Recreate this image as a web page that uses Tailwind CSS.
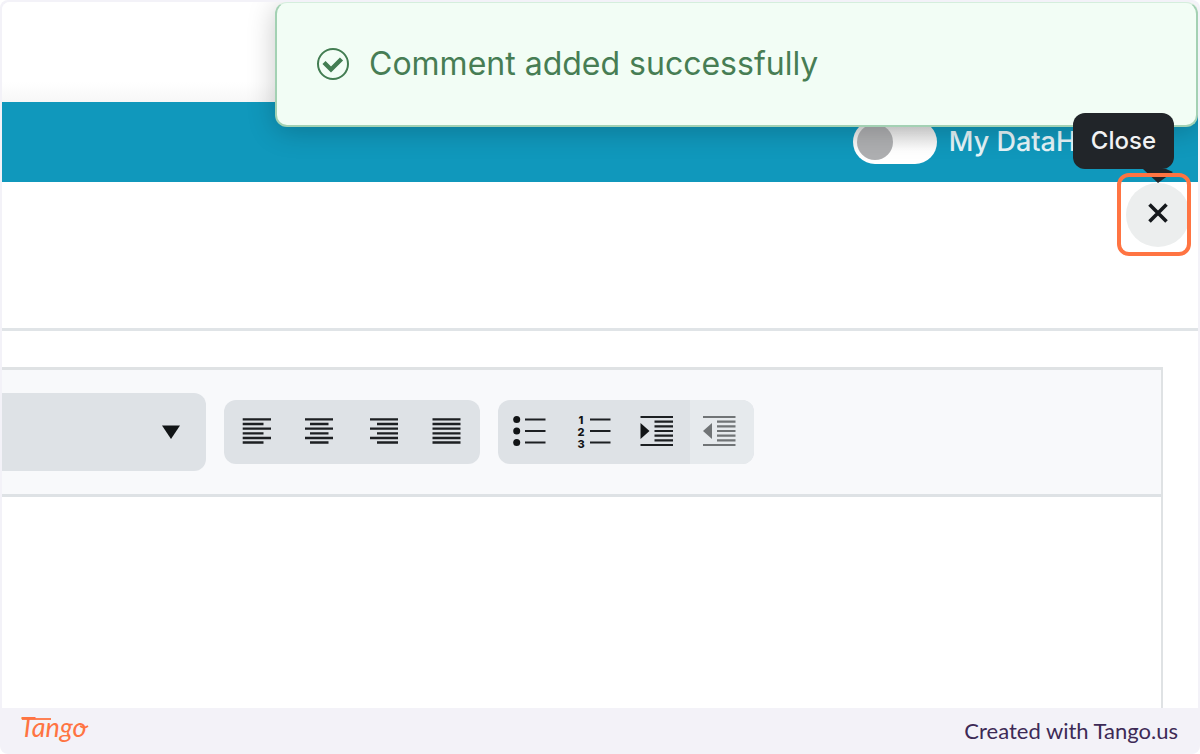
<!DOCTYPE html>
<html lang="en">
<head>
    <meta charset="UTF-8">
    <meta name="viewport" content="width=device-width, initial-scale=1.0">
    <title>Comment added successfully</title>
    <script src="https://cdn.jsdelivr.net/npm/@tailwindcss/browser@4"></script>
</head>
<body class="bg-white font-['Inter',sans-serif]">
    <div class="min-h-screen flex flex-col bg-[#f3f2f8] rounded-lg px-0.5 pt-0.5">
        <main class="relative flex-grow flex flex-col bg-white rounded-t-lg overflow-hidden">
            <div class="h-[100px] bg-gradient-to-b from-white from-80% to-[#f7f7f7]"></div>
            <header class="h-20 flex justify-end items-center gap-3 pr-[122px] bg-[#1098bc]">
                <span class="relative flex">
                    <input id="datahub" type="checkbox" class="peer appearance-none w-[84px] h-11 rounded-full bg-gradient-to-b from-[#dcdcdc] to-white to-70%">
                    <span class="pointer-events-none absolute left-1 top-1 size-9 rounded-full bg-[#aeafb1] peer-checked:left-11"></span>
                </span>
                <label for="datahub" class="text-[27px] leading-8 font-medium text-[#e6f5f9]">My DataH</label>
            </header>

            <!-- dialog header -->
            <section class="h-[149px] flex justify-end items-start pr-2 border-b-3 border-[#e0e4e7]">
                <div class="relative z-20 mt-px">
                    <div role="tooltip" class="absolute right-4 bottom-[78px] px-[18px] py-3 rounded-xl bg-[#212529] text-[#f1f2f3] text-2xl leading-8 font-medium">
                        Close
                        <svg class="absolute top-full right-0 w-8 h-4" viewBox="0 0 32 16" fill="#212529"><path d="M1 0H24L31 3L16 14Z"/></svg>
                    </div>
                    <button type="button" aria-label="Close" class="flex justify-center items-center size-16 rounded-full bg-[#eceeee]">
                        <svg class="w-5 h-6 mb-1" viewBox="0 0 20 24" fill="none" stroke="#15181c" stroke-width="3.6"><path d="M1.5 3.5L18.5 20.5M18.5 3.5L1.5 20.5"/></svg>
                    </button>
                    <span class="pointer-events-none absolute -left-[9px] -right-px -top-2.5 -bottom-[9px] border-4 border-[#ff7442] rounded-xl"></span>
                </div>
            </section>

            <!-- editor -->
            <section class="flex-grow flex flex-col mt-9 mr-[35px] border-t-3 border-r-2 border-[#dfe2e4]">
                <div class="h-[127px] flex items-center gap-[18px] bg-[#f8f9fb] border-b-3 border-[#dee2e5]">
                    <div class="relative flex">
                        <select aria-label="Format" class="appearance-none w-[204px] h-[78px] bg-[#dee2e6] rounded-r-xl"><option></option></select>
                        <svg class="pointer-events-none absolute right-[25px] top-8 w-5 h-4" viewBox="0 0 20 16" fill="#111416"><path d="M1 0.5H19L10 14Z"/></svg>
                    </div>
                    <div class="flex h-16 rounded-xl overflow-hidden bg-[#dee2e6]">
                        <button type="button" aria-label="Align left" class="w-16 flex justify-center items-center">
                            <svg class="size-8" viewBox="0 0 32 32" stroke="#1c1f22" stroke-width="2.3"><path d="M2.7 3.3H31M2.7 8H23.5M2.7 12.7H31M2.7 17.3H23.5M2.7 22H31M2.7 26.5H23.5"/></svg>
                        </button>
                        <button type="button" aria-label="Align center" class="w-16 flex justify-center items-center">
                            <svg class="size-8" viewBox="0 0 32 32" stroke="#1c1f22" stroke-width="2.3"><path d="M1 3.3H29M6 8H24.5M1 12.7H29M6 17.3H24.5M1 22H29M6 26.5H24.5"/></svg>
                        </button>
                        <button type="button" aria-label="Align right" class="w-16 flex justify-center items-center">
                            <svg class="size-8" viewBox="0 0 32 32" stroke="#1c1f22" stroke-width="2.3"><path d="M2 3.3H30M9 8H30M2 12.7H30M9 17.3H30M2 22H30M9 26.5H30"/></svg>
                        </button>
                        <button type="button" aria-label="Justify" class="w-16 flex justify-center items-center">
                            <svg class="size-8" viewBox="0 0 32 32" stroke="#1c1f22" stroke-width="2.3"><path d="M.5 3.3H28.5M.5 8H28.5M.5 12.7H28.5M.5 17.3H28.5M.5 22H28.5M.5 26.5H28.5"/></svg>
                        </button>
                    </div>
                    <div class="flex h-16 rounded-xl overflow-hidden bg-[#dee2e6]">
                        <button type="button" aria-label="Bulleted list" class="w-16 flex justify-center items-center">
                            <svg class="size-8 overflow-visible" viewBox="0 0 32 32" fill="#111416"><circle cx="2.7" cy="3.5" r="3.5"/><circle cx="2.7" cy="15" r="3.5"/><circle cx="2.7" cy="26.5" r="3.5"/><path d="M11 3.5H31.5M11 15H31.5M11 26.5H31.5" stroke="#1c1f22" stroke-width="2.2"/></svg>
                        </button>
                        <button type="button" aria-label="Numbered list" class="w-16 flex justify-center items-center">
                            <svg class="size-8 overflow-visible text-[11px] font-extrabold" viewBox="0 0 32 32" fill="#111416"><text x="0.5" y="8">1</text><text x="-0.5" y="20">2</text><text x="-0.5" y="32">3</text><path d="M12 3.5H32.5M12 15H32.5M12 26.5H32.5" stroke="#1c1f22" stroke-width="2.2"/></svg>
                        </button>
                        <button type="button" aria-label="Indent" class="w-16 flex justify-center items-center">
                            <svg class="size-8 overflow-visible" viewBox="0 0 32 32" fill="#111416"><path d="M-1.5 7V23L7.5 15Z"/><path d="M-1.5 1H31M12.5 5.7H31M12.5 10.3H31M12.5 15H31M12.5 19.7H31M12.5 24.3H31M-1.5 29H31" stroke="#1c1f22" stroke-width="2.2"/></svg>
                        </button>
                        <button type="button" aria-label="Outdent" disabled class="w-16 flex justify-center items-center bg-[#e6eaed]">
                            <svg class="size-8 overflow-visible" viewBox="0 0 32 32" fill="#707476"><path d="M6 7V23L-3 15Z"/><path d="M-3 1H29.5M11 5.7H29.5M11 10.3H29.5M11 15H29.5M11 19.7H29.5M11 24.3H29.5M-3 29H29.5" stroke="#707476" stroke-width="2.2"/></svg>
                        </button>
                    </div>
                </div>
            </section>

            <div role="status" class="absolute z-10 top-0 left-[273px] right-0 h-[125px] flex items-center gap-[18px] px-[38px] bg-[#f2fdf5] border-2 border-t border-[#a3d1b3] border-t-[#d5eedd] rounded-xl shadow-[0_4px_28px_rgba(0,0,0,0.22)]">
                <svg class="size-9" viewBox="0 0 36 36" fill="none" stroke="#437d52"><circle cx="18" cy="18" r="15" stroke-width="2"/><path d="M9 16.5L16 23.5L26.5 13" stroke-width="4.4"/></svg>
                <p class="text-[32px] leading-10 text-[#477d54]">Comment added successfully</p>
            </div>
        </main>

        <footer class="h-[46px] flex justify-between items-center pl-[18px] pr-5">
            <a href="#" class="flex" aria-label="Tango">
                <svg class="w-[70px] h-8 overflow-visible" viewBox="0 0 70 32" fill="#ff7442"><path d="M2 4H31" stroke="#ff7442" stroke-width="1.8"/><text x="0" y="22" class="text-[27px] italic font-['Lato',cursive]">Tango</text><path d="M60 11Q64 14 68 11" fill="none" stroke="#ff7442" stroke-width="1.6"/></svg>
            </a>
            <a href="#" class="text-[22px] leading-7 text-[#3d2a56] font-['Lato',sans-serif]">Created with Tango.us</a>
        </footer>
    </div>
</body>
</html>
